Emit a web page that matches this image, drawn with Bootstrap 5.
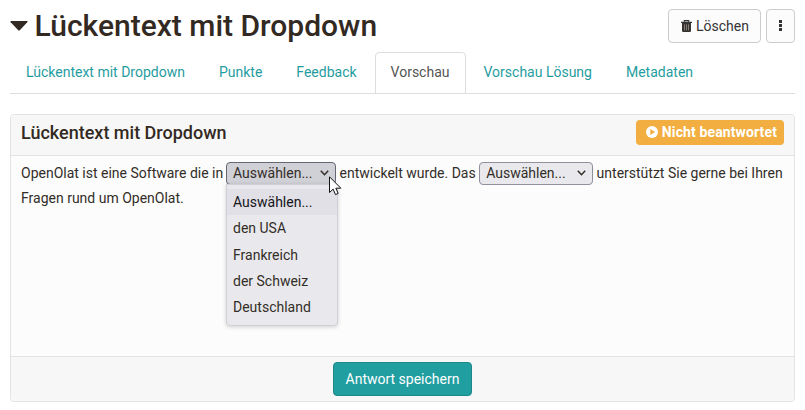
<!DOCTYPE html>
<html lang="de">
<head>
<meta charset="utf-8">
<meta name="viewport" content="width=device-width, initial-scale=1">
<title>Lückentext mit Dropdown</title>
<link href="https://cdn.jsdelivr.net/npm/bootstrap@5.3.0/dist/css/bootstrap.min.css" rel="stylesheet">
<style>
  body { font-family: Roboto, "Liberation Sans", sans-serif; font-size: 14px; line-height: 20px; color: #332d28; background: #fff; overflow: hidden; }
  .page { padding: 9px 10px 0; }
  .page-head { height: 43px; }
  .page-title { font-size: 30px; line-height: 33px; font-weight: 500; color: #332923; gap: 6.5px; }
  .page-title svg { margin-top: 1px; }
  .btn { font-size: 14px; line-height: 20px; --bs-btn-border-radius: 4px; }
  .btn-tool { height: 34px; background: #fcfcfc; border-color: #ccc; color: #333; }
  .btn-trash { width: 93px; padding: 0 0 1px 12px; }
  .btn-more { width: 29px; padding: 0 0 2px; margin-left: 5px; }
  .nav-tabs { --bs-nav-tabs-border-color: #ddd; --bs-nav-tabs-link-active-border-color: #ddd; --bs-nav-tabs-border-radius: 4px; --bs-nav-tabs-link-active-color: #555; gap: 2px; height: 42px; }
  .nav-tabs .nav-link { padding: 9px 15px 11px; height: 42px; line-height: 20px; color: #1f9d9f; }
  .nav-tabs .nav-link.active { color: #555; }
  .question { margin-top: 20px; height: 288px; border-color: #e4e4e4; border-radius: 4px; background: #fcfcfc; color: #332d28; }
  .question .card-header { height: 41px; padding: 5px 10px 0; background: #f7f7f7; border-color: #e4e4e4; }
  .question-title { font-size: 18px; line-height: 25px; font-weight: 500; color: #332923; }
  .status { height: 25px; padding: 0 7px 1px 10px; border-radius: 4px; background: #f2ae40; font-size: 14px; font-weight: 700; gap: 4px; letter-spacing: .12px; }
  .question .card-body { padding: 5px 10px 0; line-height: 25px; }
  .gap-select { height: 23px; padding: 0 6px; border: 1px solid #8f8f9d; border-radius: 4px; background: #e9e9ed; color: #332d28; line-height: 20px; vertical-align: middle; margin-top: -2px; }
  .gap-select.show { width: 110px; margin-left: -.7px; background: #d0d0d7; border-color: #676774; }
  .gap-wide { width: 114px; }
  .options { top: 23px; left: -.7px; width: 112px; min-width: 0; height: 142px; margin: 0; padding: 4px 0 0; border: 1px solid #cfcfd8; border-radius: 0 0 4px 4px; background: #e9e9ed; box-shadow: 0 1px 4px rgba(0,0,0,.18); font-size: 14px; z-index: 5; }
  .options .dropdown-item { padding: 0 6px; line-height: 26.25px; color: #332d28; }
  .options .dropdown-item.active { background: #e0e0e6; color: #15141a; }
  .pointer { left: 102px; top: 15px; z-index: 6; }
  .question .card-footer { height: 45px; padding: 5px 0 0; background: #f7f7f7; border-color: #e4e4e4; }
  .btn-save { height: 34px; width: 139px; padding: 0 0 1px; background: #219e9f; border-color: #1b8889; color: #fff; }
</style>
</head>
<body>
<main class="page">
  <header class="page-head d-flex justify-content-between align-items-start">
    <h1 class="page-title d-flex align-items-center m-0">
      <svg width="18" height="10" viewBox="0 0 18 10"><path d="M1 0h16q1 .4.3 1.2L10 9.1q-1 1-2 0L.7 1.2Q0 .4 1 0z" fill="#332923"/></svg>
      <span>Lückentext mit Dropdown</span>
    </h1>
    <div class="d-flex">
      <button class="btn btn-tool btn-trash d-flex align-items-center" type="button">
        <svg class="me-1" width="11" height="12" viewBox="0 0 11 12"><path d="M3.3 1.8V.6h4.4v1.2" fill="none" stroke="#333" stroke-width="1.2"/><path d="M0 1.8h11v1.3H0zM1 3h9v7.7q0 1.3-1.2 1.3H2.2Q1 12 1 10.700z" fill="#333"/><path d="M3.5 4.300v6M5.500 4.300v6M7.500 4.300v6" stroke="#a08c80" stroke-width=".8"/></svg>Löschen
      </button>
      <button class="btn btn-tool btn-more d-flex align-items-center justify-content-center" type="button" aria-label="Mehr">
        <svg width="3" height="11" viewBox="0 0 3 11"><path d="M0 0h3v3H0zM0 4h3v3H0zM0 8h3v3H0z" fill="#333"/></svg>
      </button>
    </div>
  </header>
  <ul class="nav nav-tabs flex-nowrap">
    <li class="nav-item"><a class="nav-link" href="#">Lückentext mit Dropdown</a></li>
    <li class="nav-item"><a class="nav-link" href="#">Punkte</a></li>
    <li class="nav-item"><a class="nav-link" href="#">Feedback</a></li>
    <li class="nav-item"><a class="nav-link active" href="#">Vorschau</a></li>
    <li class="nav-item"><a class="nav-link" href="#">Vorschau Lösung</a></li>
    <li class="nav-item"><a class="nav-link" href="#">Metadaten</a></li>
  </ul>
  <section class="card question">
    <div class="card-header d-flex justify-content-between align-items-start">
      <h2 class="question-title m-0">Lückentext mit Dropdown</h2>
      <span class="status d-inline-flex align-items-center text-white">
        <svg width="12" height="12" viewBox="0 0 12 12"><circle cx="6" cy="6" r="6" fill="#fff"/><path d="M4.300 3.100v5.800L9.200 6z" fill="#f2ae40"/></svg>Nicht beantwortet
      </span>
    </div>
    <div class="card-body">
      OpenOlat ist eine Software die in
      <span class="dropdown d-inline-block"><span class="gap-select show d-inline-flex align-items-center justify-content-between" role="combobox" aria-expanded="true">Auswählen...<svg width="9" height="6" viewBox="0 0 9 6"><path d="M.8.8l3.700 3.900L8.200.8" fill="none" stroke="#332d28" stroke-width="1.500"/></svg></span><span class="dropdown-menu options show">
        <a class="dropdown-item active" href="#">Auswählen...</a>
        <a class="dropdown-item" href="#">den USA</a>
        <a class="dropdown-item" href="#">Frankreich</a>
        <a class="dropdown-item" href="#">der Schweiz</a>
        <a class="dropdown-item" href="#">Deutschland</a>
      </span><svg class="pointer position-absolute" width="13" height="20" viewBox="0 0 13 20"><path d="M.5.8v15.700l3.600-3.400 2.400 5.500 2.700-1.200-2.400-5.200h5z" fill="#fff" stroke="#111" stroke-linejoin="round"/></svg></span>
      entwickelt wurde. Das
      <span class="gap-select gap-wide d-inline-flex align-items-center justify-content-between" role="combobox">Auswählen...<svg width="9" height="6" viewBox="0 0 9 6"><path d="M.8.8l3.700 3.900L8.200.8" fill="none" stroke="#332d28" stroke-width="1.500"/></svg></span>
      unterstützt Sie gerne bei Ihren Fragen rund um OpenOlat.
    </div>
    <div class="card-footer text-center">
      <button class="btn btn-save" type="button">Antwort speichern</button>
    </div>
  </section>
</main>
</body>
</html>
